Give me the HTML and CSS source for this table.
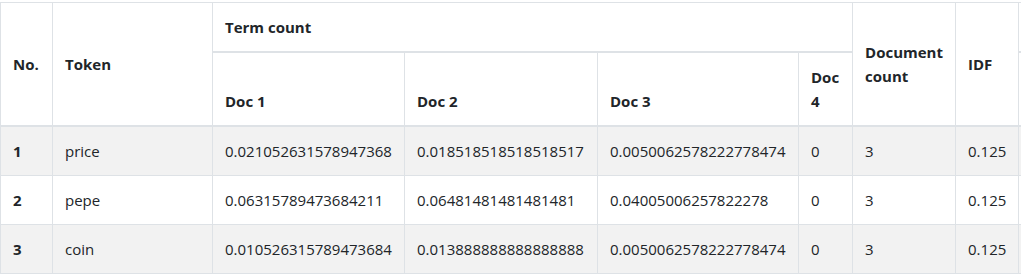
FILE: index.html
```html
<!DOCTYPE html>
<html lang="en">
<head>
<meta charset="utf-8">
<title>TF-IDF table</title>
<link rel="stylesheet" href="styles.css">
</head>
<body>
<div class="table-wrap">
  <table class="tfidf">
    <colgroup>
      <col class="c-no">
      <col class="c-token">
      <col class="c-doc1">
      <col class="c-doc2">
      <col class="c-doc3">
      <col class="c-doc4">
      <col class="c-dcount">
      <col class="c-idf">
      <col class="c-stub">
    </colgroup>
    <thead>
      <tr>
        <th rowspan="2" class="mid">No.</th>
        <th rowspan="2" class="mid">Token</th>
        <th colspan="4" class="mid">Term count</th>
        <th rowspan="2" class="mid">Document count</th>
        <th rowspan="2" class="mid">IDF</th>
        <th class="stub"></th>
      </tr>
      <tr>
        <th>Doc 1</th>
        <th>Doc 2</th>
        <th>Doc 3</th>
        <th>Doc 4</th>
        <th class="stub"></th>
      </tr>
    </thead>
    <tbody>
      <tr>
        <th>1</th>
        <td>price</td>
        <td>0.021052631578947368</td>
        <td>0.018518518518518517</td>
        <td>0.0050062578222778474</td>
        <td>0</td>
        <td>3</td>
        <td>0.125</td>
        <td class="stub"></td>
      </tr>
      <tr>
        <th>2</th>
        <td>pepe</td>
        <td>0.06315789473684211</td>
        <td>0.06481481481481481</td>
        <td>0.04005006257822278</td>
        <td>0</td>
        <td>3</td>
        <td>0.125</td>
        <td class="stub"></td>
      </tr>
      <tr>
        <th>3</th>
        <td>coin</td>
        <td>0.010526315789473684</td>
        <td>0.013888888888888888</td>
        <td>0.0050062578222778474</td>
        <td>0</td>
        <td>3</td>
        <td>0.125</td>
        <td class="stub"></td>
      </tr>
    </tbody>
  </table>
</div>
</body>
</html>
```

FILE: styles.css
```css
html, body {
  margin: 0;
  padding: 0;
  background: #ffffff;
}

body {
  font-family: "Open Sans", "Noto Sans", "Liberation Sans", sans-serif;
  font-size: 15px;
  line-height: 24px;
  color: #212529;
}

.table-wrap {
  padding-top: 2px;
  width: 1021px;
  overflow: hidden;
}

.tfidf {
  border-collapse: collapse;
  table-layout: fixed;
  width: 1040px;
}

.c-no { width: 52px; }
.c-token { width: 160px; }
.c-doc1 { width: 192px; }
.c-doc2 { width: 193px; }
.c-doc3 { width: 201px; }
.c-doc4 { width: 54px; }
.c-dcount { width: 103px; }
.c-idf { width: 63px; }
.c-stub { width: 22px; }

.tfidf th,
.tfidf td {
  border: 1px solid #dee2e6;
  padding: 12px;
  text-align: left;
  vertical-align: top;
  white-space: normal;
  overflow: hidden;
}

.tfidf th {
  font-weight: 700;
}

.tfidf thead th {
  vertical-align: bottom;
  border-bottom-width: 2px;
}

.tfidf thead th.mid {
  vertical-align: middle;
}

.tfidf tbody tr:nth-child(odd) {
  background-color: #f2f2f2;
}
```
